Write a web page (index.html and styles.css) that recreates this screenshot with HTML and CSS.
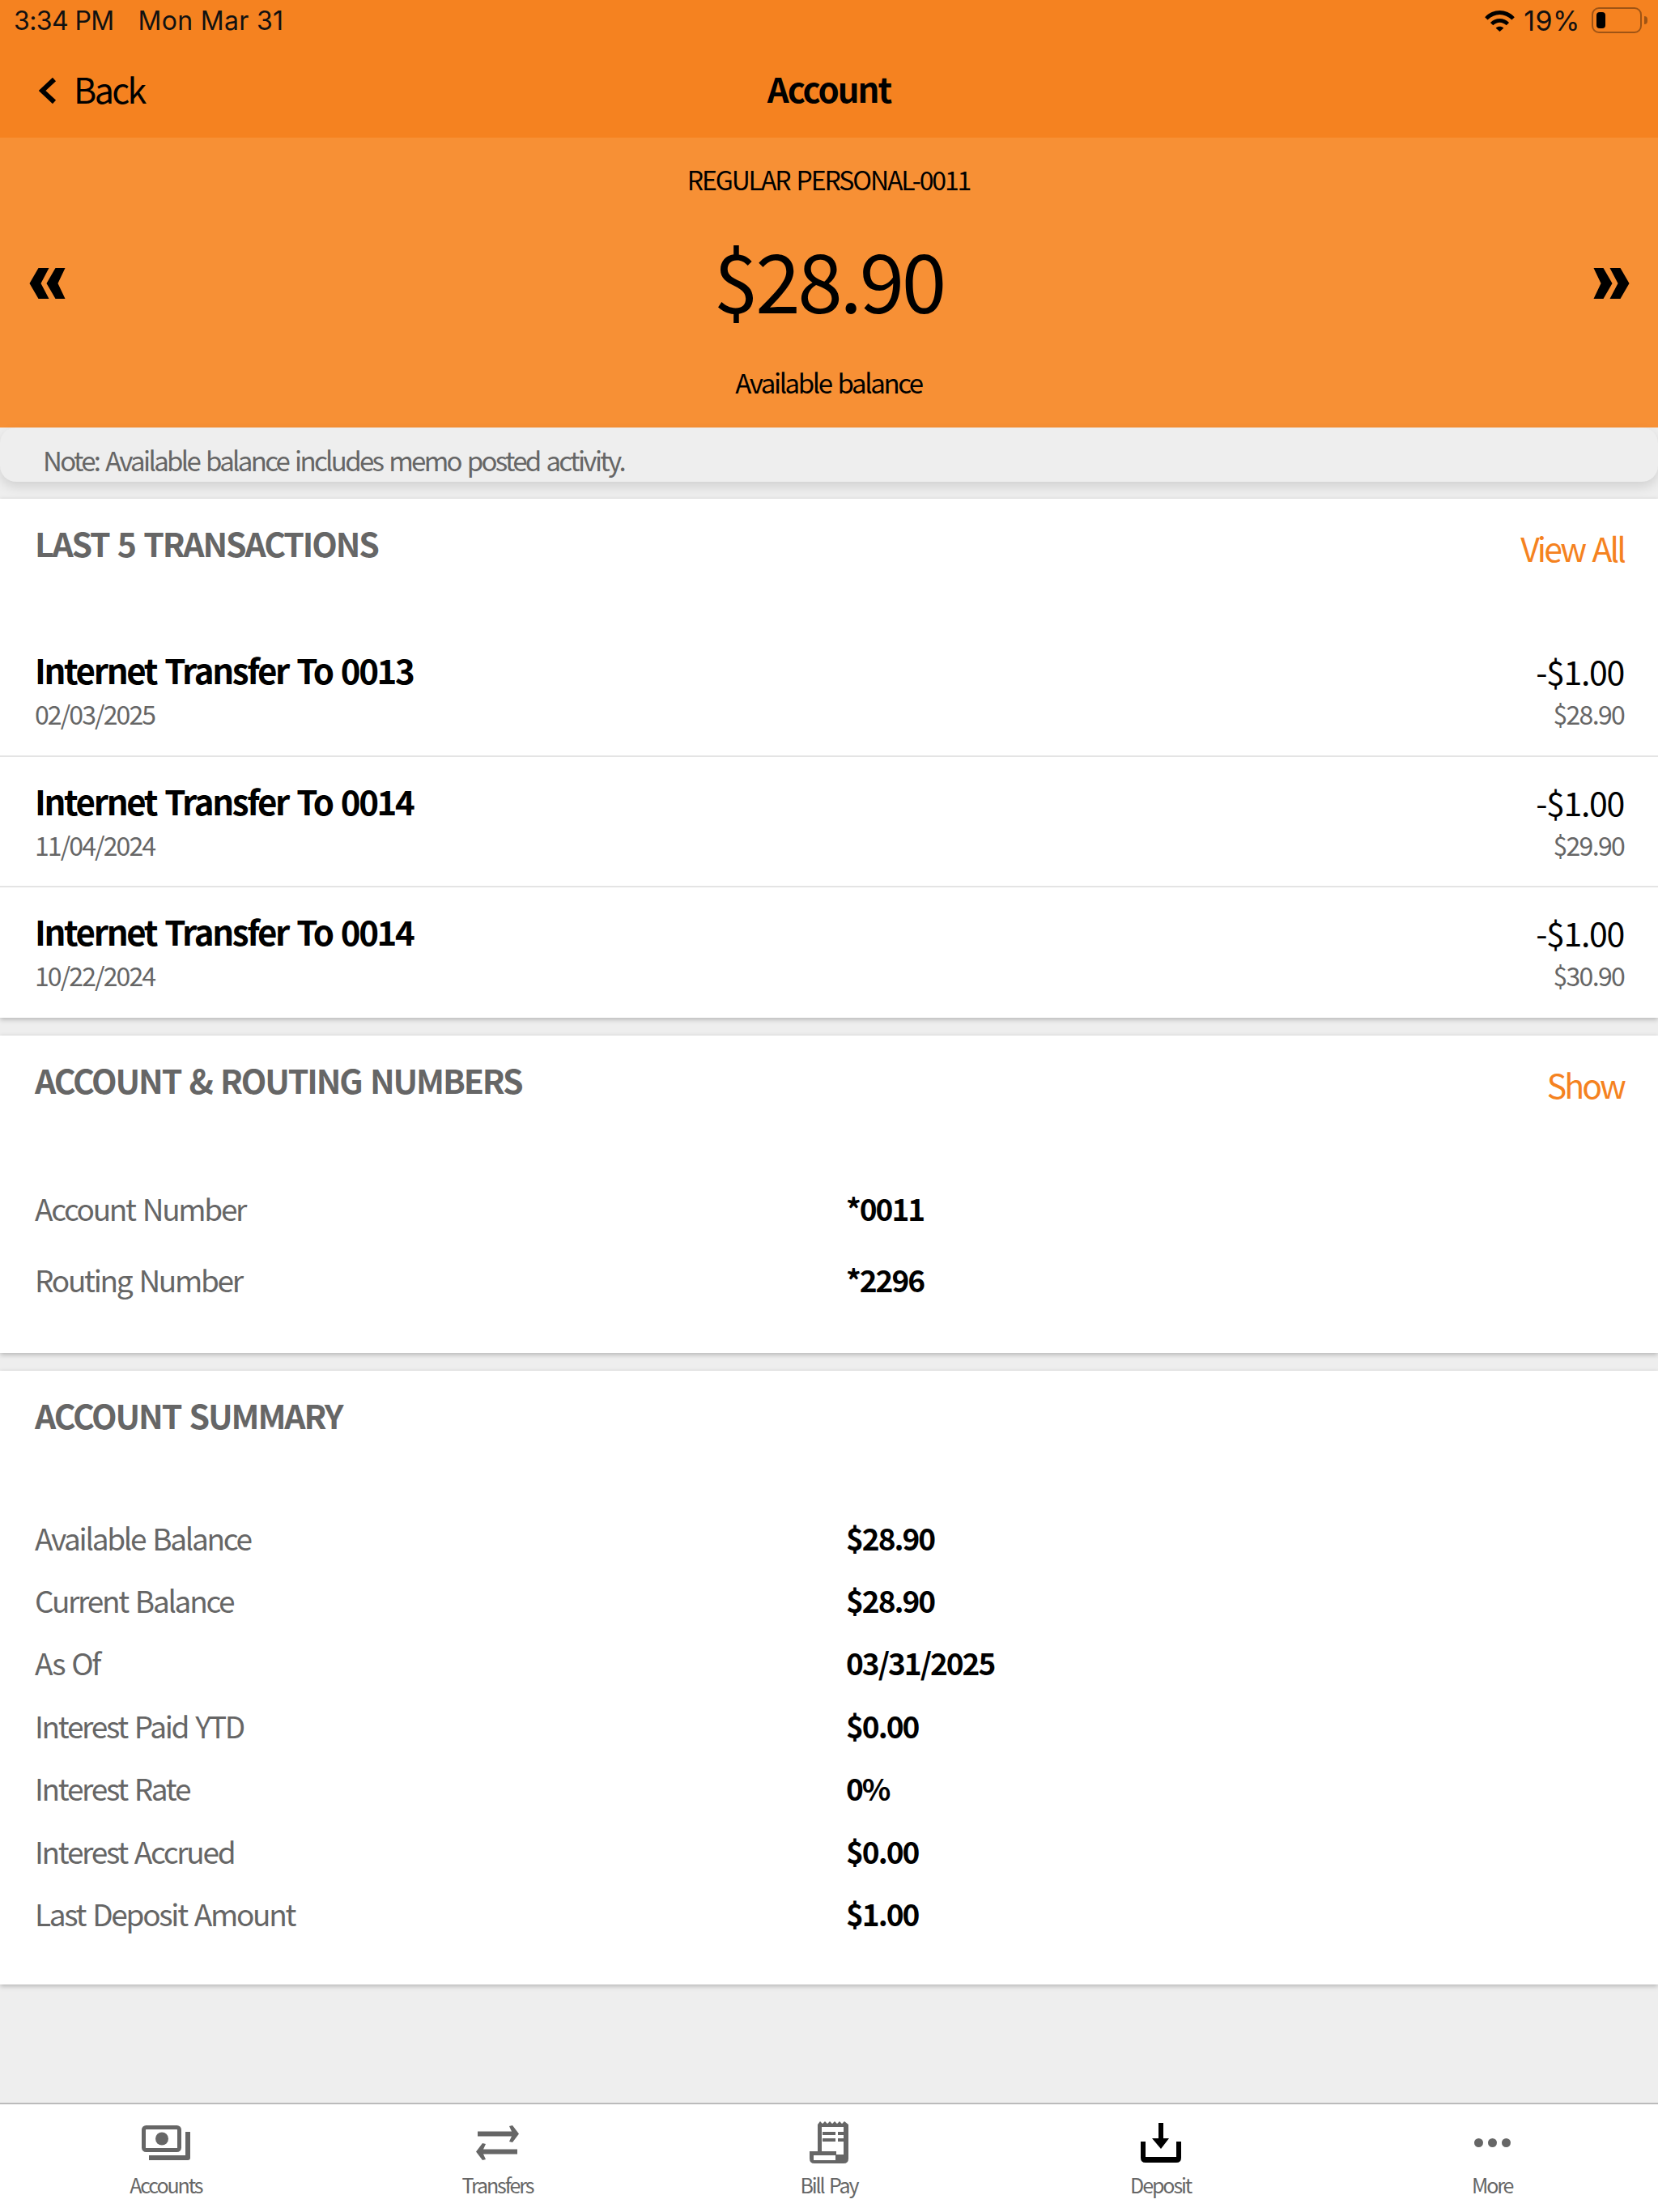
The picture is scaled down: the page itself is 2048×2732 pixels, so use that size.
FILE: index.html

```html
<!DOCTYPE html>
<html lang="en">
<head>
  <meta charset="UTF-8">
  <title>Account</title>
  <link rel="stylesheet" href="styles.css">
</head>
<body>
  <div class="app">
    <div class="top-bar">
      <div class="status-bar">
        <span class="time">3:34 PM</span>
        <span class="date">Mon Mar 31</span>
        <span class="status-right">
          <svg class="wifi" viewBox="0 0 38 28">
            <path d="M0 9.500C10.500 -1.800 27.500 -1.800 38 9.500L34.500 13C25.500 4 12.500 4 3.500 13Z"/>
            <path d="M7 16.500C13.500 9.800 24.500 9.800 31 16.500L27.500 20C22.500 15 15.500 15 10.500 20Z"/>
            <path d="M14 23.500C16.500 20.800 21.500 20.800 24 23.500L19 28Z"/>
          </svg>
          <span class="pct">19%</span>
          <span class="battery"><span class="battery-fill"></span></span>
          <span class="battery-tip"></span>
        </span>
      </div>
      <div class="nav-bar">
        <a class="back">
          <svg class="back-icon" viewBox="0 0 22 32"><path d="M19 2L4 16L19 30"/></svg>
          Back
        </a>
        <div class="nav-title">Account</div>
      </div>
    </div>

    <div class="hero">
      <svg class="arrows" viewBox="0 0 44 38"><path d="M11 0H24L14 19L24 38H11L0 19Z"/><path d="M32 0H44L35 19L44 38H32L21 19Z"/></svg>
      <div class="hero-mid">
        <div class="account-name">REGULAR PERSONAL-0011</div>
        <div class="balance">$28.90</div>
        <div class="balance-label">Available balance</div>
      </div>
      <svg class="arrows" viewBox="0 0 44 38"><path d="M33 0H20L30 19L20 38H33L44 19Z"/><path d="M12 0H0L9 19L0 38H12L23 19Z"/></svg>
    </div>

    <div class="note">Note: Available balance includes memo posted activity.</div>

    <div class="main">
      <section class="card tx-card">
        <div class="card-head">
          <h2>LAST 5 TRANSACTIONS</h2>
          <a class="link">View All</a>
        </div>
        <div class="tx">
          <div>
            <div class="tx-name">Internet Transfer To 0013</div>
            <div class="tx-date">02/03/2025</div>
          </div>
          <div class="tx-right">
            <div class="tx-amt">-$1.00</div>
            <div class="tx-bal">$28.90</div>
          </div>
        </div>
        <div class="tx">
          <div>
            <div class="tx-name">Internet Transfer To 0014</div>
            <div class="tx-date">11/04/2024</div>
          </div>
          <div class="tx-right">
            <div class="tx-amt">-$1.00</div>
            <div class="tx-bal">$29.90</div>
          </div>
        </div>
        <div class="tx">
          <div>
            <div class="tx-name">Internet Transfer To 0014</div>
            <div class="tx-date">10/22/2024</div>
          </div>
          <div class="tx-right">
            <div class="tx-amt">-$1.00</div>
            <div class="tx-bal">$30.90</div>
          </div>
        </div>
      </section>

      <section class="card numbers-card">
        <div class="card-head">
          <h2>ACCOUNT &amp; ROUTING NUMBERS</h2>
          <a class="link">Show</a>
        </div>
        <div class="kv"><span>Account Number</span><b>*0011</b></div>
        <div class="kv"><span>Routing Number</span><b>*2296</b></div>
      </section>

      <section class="card summary-card">
        <div class="card-head">
          <h2>ACCOUNT SUMMARY</h2>
        </div>
        <div class="kv"><span>Available Balance</span><b>$28.90</b></div>
        <div class="kv"><span>Current Balance</span><b>$28.90</b></div>
        <div class="kv"><span>As Of</span><b>03/31/2025</b></div>
        <div class="kv"><span>Interest Paid YTD</span><b>$0.00</b></div>
        <div class="kv"><span>Interest Rate</span><b>0%</b></div>
        <div class="kv"><span>Interest Accrued</span><b>$0.00</b></div>
        <div class="kv"><span>Last Deposit Amount</span><b>$1.00</b></div>
      </section>
    </div>

    <nav class="tabs">
      <a class="tab">
        <span class="tab-icon">
          <svg width="60" height="43" viewBox="0 0 60 43">
            <rect x="2.500" y="2.500" width="44" height="28" rx="3" fill="none" stroke="#666" stroke-width="5"/>
            <circle cx="25" cy="16.500" r="8" fill="#666"/>
            <path d="M9 37H54V8H60V40Q60 43 57 43H9Z" fill="#666"/>
          </svg>
        </span>
        <span>Accounts</span>
      </a>
      <a class="tab">
        <span class="tab-icon">
          <svg width="53" height="43" viewBox="0 0 53 43">
            <path d="M2 7.500H44L41 1L45 0L53 10.500L45 21L41 20L44 13.500H2Z" fill="#666"/>
            <path d="M51 29.500H9L12 23L8 22L0 32.500L8 43L12 42L9 35.500H51Z" fill="#666"/>
          </svg>
        </span>
        <span>Transfers</span>
      </a>
      <a class="tab">
        <span class="tab-icon">
          <svg width="48" height="52" viewBox="0 0 48 52">
            <path d="M10 4L13 0L16 3L19 0L22 3L25 0L28 3L31 0L34 3L37 0L40 3L43 0L48 4V46Q48 52 42 52H6Q0 52 0 46V37H10Z" fill="#666"/>
            <rect x="15" y="7" width="27" height="34" fill="#fff"/>
            <path d="M16 13H32V17H16ZM35 13H42V17H35ZM16 21H32V25H16ZM35 21H42V25H35Z" fill="#666"/>
            <path d="M10 37H33V46H42V41H15V37Z" fill="#666"/>
            <rect x="5" y="42" width="27" height="6" fill="#fff"/>
          </svg>
        </span>
        <span>Bill Pay</span>
      </a>
      <a class="tab">
        <span class="tab-icon">
          <svg width="50" height="49" viewBox="0 0 50 49">
            <path d="M22 0H28V19H35L25 32L14 19H22Z" fill="#000"/>
            <path d="M0 23H6V42H44V23H50V43Q50 49 44 49H6Q0 49 0 43Z" fill="#000"/>
          </svg>
        </span>
        <span>Deposit</span>
      </a>
      <a class="tab">
        <span class="tab-icon">
          <svg width="45" height="11" viewBox="0 0 45 11">
            <circle cx="5.500" cy="5.500" r="5.500" fill="#666"/>
            <circle cx="22.500" cy="5.500" r="5.500" fill="#666"/>
            <circle cx="39.500" cy="5.500" r="5.500" fill="#666"/>
          </svg>
        </span>
        <span>More</span>
      </a>
    </nav>
  </div>
</body>
</html>
```

FILE: styles.css

```css
* {
  box-sizing: border-box;
}
body {
  margin: 0;
  font-family: "Noto Sans CJK SC", "Noto Sans", sans-serif;
  color: #000;
  background: #eee;
  word-spacing: 3px;
}
a {
  color: inherit;
  text-decoration: none;
}
.app {
  width: 2048px;
  height: 2732px;
  display: flex;
  flex-direction: column;
  overflow: hidden;
}
.top-bar {
  height: 170px;
  background: #f58220;
}
.status-bar {
  height: 50px;
  display: flex;
  align-items: center;
  padding-left: 17px;
  font-family: Inter, "Liberation Sans", sans-serif;
  font-size: 32px;
  color: #111;
  word-spacing: 0;
}
.time {
  letter-spacing: -0.6px;
}
.date {
  margin-left: 30px;
  letter-spacing: 0.3px;
}
.status-right {
  margin-left: auto;
  margin-right: 13px;
  display: flex;
  align-items: center;
}
.wifi {
  width: 37px;
  height: 27px;
  margin-right: 11px;
}
.pct {
  font-size: 34px;
  letter-spacing: 0.5px;
}
.battery {
  width: 62px;
  height: 32px;
  margin-left: 14px;
  padding: 4px;
  border: 2px solid rgba(0, 0, 0, 0.35);
  border-radius: 9px;
}
.battery-fill {
  display: block;
  width: 11px;
  height: 100%;
  background: #000;
  border-radius: 4px;
}
.battery-tip {
  width: 4px;
  height: 10px;
  margin-left: 3px;
  background: rgba(0, 0, 0, 0.35);
  border-radius: 0 4px 4px 0;
}
.nav-bar {
  position: relative;
  height: 120px;
  display: flex;
  align-items: center;
  justify-content: center;
  padding-bottom: 4px;
}
.back {
  position: absolute;
  left: 48px;
  top: 28px;
  display: flex;
  align-items: center;
  gap: 21px;
  font-size: 43px;
  letter-spacing: -2.6px;
}
.back-icon {
  width: 22px;
  height: 32px;
  margin-top: 5px;
  fill: none;
  stroke: #000;
  stroke-width: 6;
}
.nav-title {
  font-size: 42px;
  font-weight: 700;
  letter-spacing: -2px;
}
.hero {
  height: 358px;
  background: #f79035;
  display: flex;
  align-items: center;
  justify-content: space-between;
  padding: 0 35px 0 36px;
}
.arrows {
  width: 45px;
  height: 38px;
  margin-top: 1px;
}
.hero-mid {
  margin-right: 2px;
  text-align: center;
}
.account-name {
  font-size: 32px;
  letter-spacing: -2.100px;
  margin-top: -4px;
}
.balance {
  font-size: 100px;
  line-height: 120px;
  letter-spacing: -3.500px;
  margin-top: 40px;
}
.balance-label {
  font-size: 33px;
  letter-spacing: -2.400px;
  margin-top: 44px;
}
.note {
  height: 67px;
  background: #eee;
  border-radius: 20px;
  padding: 12px 0 0 53px;
  display: flex;
  align-items: center;
  font-size: 33px;
  letter-spacing: -2.650px;
  color: #666;
  box-shadow: 0 6px 14px rgba(0, 0, 0, 0.12);
}
.main {
  flex: 1;
  padding-top: 21px;
  display: flex;
  flex-direction: column;
  gap: 22px;
}
.card {
  background: #fff;
  padding: 0 42px 0 43px;
  box-shadow: 0 2px 6px rgba(0, 0, 0, 0.25);
}
.card-head {
  display: flex;
  justify-content: space-between;
  align-items: flex-start;
  padding-top: 24px;
}
h2 {
  margin: 0;
  font-size: 41px;
  font-weight: 700;
  line-height: 60px;
  letter-spacing: -2.100px;
  color: #666;
}
.link {
  font-size: 41px;
  line-height: 60px;
  letter-spacing: -2.900px;
  color: #f58220;
  margin-top: 6px;
}
.tx-card {
  height: 641px;
}
.tx-card .card-head {
  height: 155px;
}
.tx {
  height: 161.500px;
  margin: 0 -42px 0 -43px;
  padding: 26px 42px 0 43px;
  display: flex;
  justify-content: space-between;
  align-items: flex-start;
}
.tx + .tx {
  border-top: 2px solid #e4e4e4;
  padding-top: 24px;
}
.tx-name {
  font-size: 42px;
  font-weight: 700;
  line-height: 60px;
  letter-spacing: -2.350px;
}
.tx-date {
  font-size: 32px;
  line-height: 44px;
  color: #666;
  letter-spacing: -1.9px;
  margin-top: 2px;
}
.tx-right {
  text-align: right;
  margin-top: 1px;
}
.tx-amt {
  font-size: 41px;
  line-height: 60px;
  letter-spacing: -1.3px;
}
.tx-bal {
  font-size: 32px;
  line-height: 44px;
  color: #666;
  letter-spacing: -1.7px;
  margin-top: 1px;
}
.numbers-card {
  height: 392px;
}
.numbers-card .card-head {
  height: 169px;
}
.numbers-card .kv {
  height: 88px;
}
.summary-card {
  height: 758px;
}
.summary-card .card-head {
  height: 167px;
}
.summary-card .kv {
  height: 77.400px;
}
.kv {
  display: grid;
  grid-template-columns: 1002px 1fr;
  align-items: center;
  font-size: 37px;
  letter-spacing: -2.300px;
  color: #666;
}
.kv b {
  color: #000;
  letter-spacing: -2px;
}
.tabs {
  height: 135px;
  background: #fff;
  border-top: 2px solid #bbb;
  display: grid;
  grid-template-columns: repeat(5, 1fr);
}
.tab {
  display: flex;
  flex-direction: column;
  align-items: center;
  font-size: 25px;
  letter-spacing: -2.100px;
  color: #666;
}
.tab-icon {
  height: 81px;
  display: flex;
  align-items: center;
  padding-top: 13px;
}
```
